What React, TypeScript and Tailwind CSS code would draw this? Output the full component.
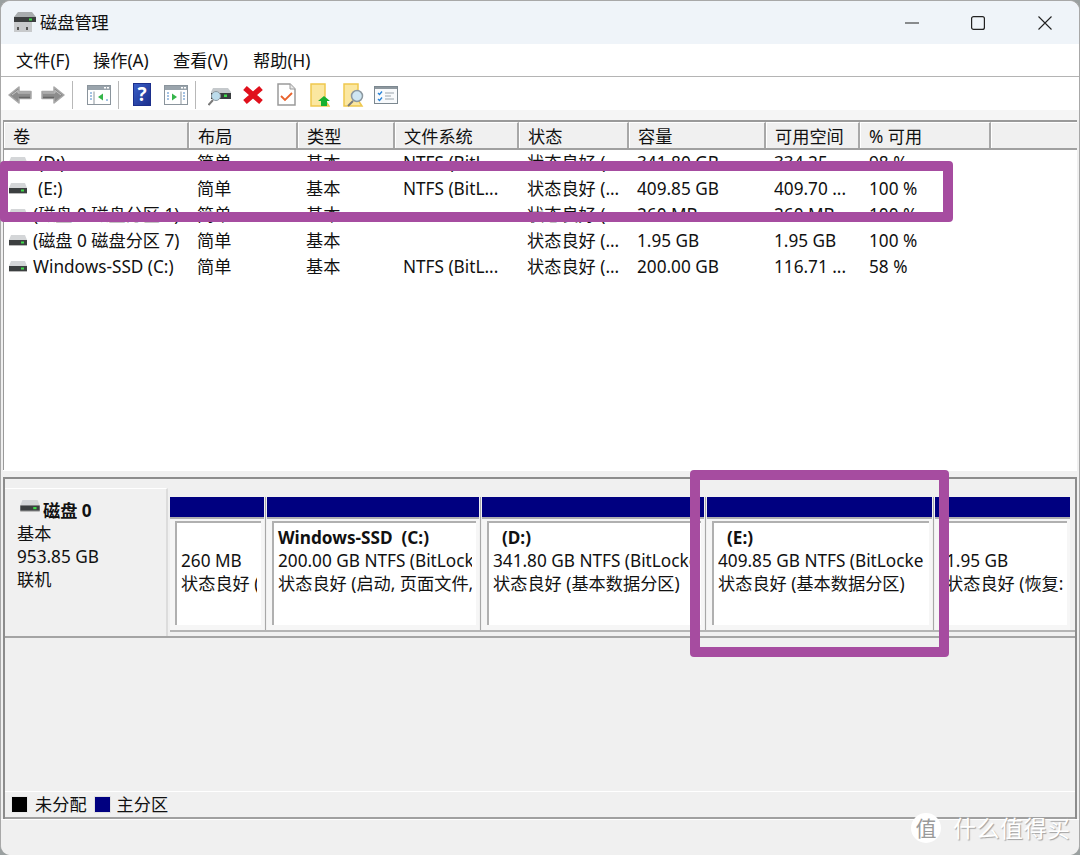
const columns = [
  { label: "卷", width: "w-[185px]" },
  { label: "布局", width: "w-[109px]" },
  { label: "类型", width: "w-[97px]" },
  { label: "文件系统", width: "w-[124px]" },
  { label: "状态", width: "w-[110px]" },
  { label: "容量", width: "w-[137px]" },
  { label: "可用空间", width: "w-[94px]" },
  { label: "% 可用", width: "w-[131px]" },
];

const rows = [
  { name: "(D:)", pad: "pl-[11px]", cells: ["简单", "基本", "NTFS (BitL...", "状态良好 (...", "341.80 GB", "334.25 ...", "98 %"] },
  { name: "(E:)", pad: "pl-[11px]", cells: ["简单", "基本", "NTFS (BitL...", "状态良好 (...", "409.85 GB", "409.70 ...", "100 %"] },
  { name: "(磁盘 0 磁盘分区 1)", pad: "pl-[6px]", cells: ["简单", "基本", "", "状态良好 (...", "260 MB", "260 MB", "100 %"] },
  { name: "(磁盘 0 磁盘分区 7)", pad: "pl-[6px]", cells: ["简单", "基本", "", "状态良好 (...", "1.95 GB", "1.95 GB", "100 %"] },
  { name: "Windows-SSD (C:)", pad: "pl-[6px]", cells: ["简单", "基本", "NTFS (BitL...", "状态良好 (...", "200.00 GB", "116.71 ...", "58 %"] },
];

const partitions = [
  { width: "w-[94px]", name: "", lines: ["260 MB", "状态良好 ("] },
  { width: "w-[212px]", name: "Windows-SSD  (C:)", lines: ["200.00 GB NTFS (BitLock", "状态良好 (启动, 页面文件,"] },
  { width: "w-[222px]", name: "  (D:)", lines: ["341.80 GB NTFS (BitLocke", "状态良好 (基本数据分区)"] },
  { width: "w-[225px]", name: "  (E:)", lines: ["409.85 GB NTFS (BitLocke", "状态良好 (基本数据分区)"] },
  { width: "w-[135px]", name: "", lines: ["1.95 GB", "状态良好 (恢复:"] },
];

const HddIcon = ({ className = "w-[18px] h-[12px]" }: { className?: string }) => (
  <svg viewBox="0 0 18 12" className={className}>
    <path d="M2 0H16L18 5H0Z" fill="#d4d6d8" />
    <rect x="0" y="5" width="18" height="5" fill="#3c3f40" />
    <rect x="0" y="10" width="18" height="1" fill="#b8b8b8" />
    <rect x="12" y="6.5" width="3" height="2" fill="#3fdc4a" />
  </svg>
);

const PaneIcon = ({ flip }: { flip?: boolean }) => (
  <svg viewBox="0 0 24 20" className="w-[24px] h-[20px]">
    <rect x="0.5" y="0.5" width="23" height="19" fill="#fff" stroke="#8a949c" />
    <rect x="1" y="1" width="22" height="4" fill="#9aa4ac" />
    <rect x="17" y="2" width="2" height="1.5" fill="#fff" />
    <rect x="20" y="2" width="2" height="1.5" fill="#fff" />
    <path d={flip ? "M17 6.5V19" : "M7 6.5V19"} stroke="#8a949c" fill="none" />
    <path
      d={flip ? "M3 8h2M3 11h2M3 14h2M19 8h2M19 11h2M19 14h2" : "M3 8h2M3 11h2M3 14h2M19 15h2"}
      stroke="#4a86c8"
      fill="none"
    />
    <path d={flip ? "M8 8.5L13 12L8 15.5Z" : "M16 8.5L11 12L16 15.5Z"} fill="#35b54a" />
  </svg>
);

const ArrowIcon = ({ right }: { right?: boolean }) => (
  <svg viewBox="0 0 24 18" className={`w-[24px] h-[18px] ${right ? "-scale-x-100" : ""}`}>
    <path d="M1 9L11 1V5.5H23V12.5H11V17Z" fill="#8c8c8c" stroke="#a8a8a8" strokeWidth="1.5" strokeLinejoin="round" />
    <path d="M4 9L10 4.5V7H22" stroke="#c4c4c4" fill="none" />
    <path d="M11 11.5H22" stroke="#666" strokeWidth="1.5" fill="none" />
  </svg>
);

const FolderBase = () => (
  <path d="M1 1H15V17L19 23H1Z" fill="#fbe7a0" stroke="#efc84e" strokeWidth="1.5" />
);

const Toolbar = () => (
  <div className="h-[34px] relative bg-white shrink-0 border-t border-[#b4b4b4] flex items-center pl-[7px] pt-[2px]">
    <div className="w-[33px]"><ArrowIcon /></div>
    <ArrowIcon right />
    <div className="w-px h-[28px] bg-[#b8b8b8] ml-[7px] mr-[14px]" />
    <PaneIcon />
    <div className="w-px h-[28px] bg-[#b8b8b8] ml-[7px] mr-[14px]" />
    <div className="w-[18px] h-[23px] bg-gradient-to-br from-[#3a5fc8] to-[#1c2f8c] border border-[#1c2f8c] text-white text-[19px] leading-[21px] font-bold text-center">?</div>
    <div className="w-[13px]" />
    <PaneIcon flip />
    <div className="w-px h-[28px] bg-[#b8b8b8] ml-[7px] mr-[12px]" />
    <svg viewBox="0 0 23 24" className="w-[23px] h-[24px]">
      <path d="M5 5H20L23 9V16H3V9Z" fill="#c5c9cc" />
      <rect x="3" y="10" width="20" height="6" fill="#3a3d3e" />
      <rect x="16" y="11.5" width="3" height="2.5" fill="#3fdc4a" />
      <circle cx="8" cy="13" r="4.5" fill="#bcdcec" stroke="#8c98a0" />
      <path d="M5 17L0.5 22" stroke="#7a7a7a" strokeWidth="2" />
    </svg>
    <div className="w-[11px]" />
    <svg viewBox="0 0 22 20" className="w-[22px] h-[20px]">
      <path d="M3 3L19 17M19 3L3 17" stroke="#e0101c" strokeWidth="5.5" />
    </svg>
    <div className="w-[13px]" />
    <svg viewBox="0 0 19 23" className="w-[19px] h-[23px]">
      <path d="M1 1H13L18 6V22H1Z" fill="#fff" stroke="#9a9a9a" strokeWidth="1.5" />
      <path d="M13 1V6H18" fill="#e8e8e8" stroke="#9a9a9a" />
      <path d="M4 13L8 17L15 10" fill="none" stroke="#e8622c" strokeWidth="1.8" />
    </svg>
    <div className="w-[14px]" />
    <svg viewBox="0 0 20 24" className="w-[20px] h-[24px]">
      <FolderBase />
      <path d="M14 13L20 18H17V23H11V18H8Z" fill="#18b030" />
    </svg>
    <div className="w-[13px]" />
    <svg viewBox="0 0 21 24" className="w-[21px] h-[24px]">
      <FolderBase />
      <circle cx="14" cy="13" r="5.5" fill="#cfe6f2" stroke="#8c98a0" strokeWidth="1.5" />
      <path d="M10 18L5 23" stroke="#7a7a7a" strokeWidth="2" />
    </svg>
    <div className="w-[10px]" />
    <svg viewBox="0 0 24 18" className="w-[24px] h-[18px]">
      <rect x="0.5" y="0.5" width="23" height="17" fill="#f8fafc" stroke="#7c8890" />
      <rect x="1" y="1" width="22" height="2" fill="#8e989f" />
      <path d="M4 7L5.5 8.5L8 5.5M4 13L5.5 14.5L8 11.5" stroke="#2a84d8" strokeWidth="1.4" fill="none" />
      <path d="M11 7H20M11 10H17M11 13H20" stroke="#9aa4ac" fill="none" />
    </svg>
  </div>
);

const VolumeList = () => (
  <div className="h-[350px] shrink-0 bg-white border-t-2 border-l border-[#9a9a9a] overflow-hidden">
    <div className="h-[28px] flex bg-[#f0f0f0] border-b-2 border-[#a0a0a0]">
      {columns.map((c) => (
        <div
          key={c.label}
          className={`${c.width} shrink-0 pl-[8px] border-l border-t border-white border-r-2 border-r-[#a8a8a8] leading-[27px] whitespace-nowrap`}
        >
          {c.label}
        </div>
      ))}
      <div className="flex-1 border-l border-t border-white" />
    </div>
    {rows.map((r) => (
      <div key={r.name} className="h-[26px] flex items-center whitespace-nowrap leading-[26px]">
        <div className="w-[185px] shrink-0 flex items-center pl-[5px]">
          <HddIcon />
          <span className={r.pad}>{r.name}</span>
        </div>
        {r.cells.map((c, i) => (
          <div key={i} className={`${columns[i + 1].width} shrink-0 ${i === 6 ? "pl-[9px]" : "pl-[8px]"}`}>
            {c}
          </div>
        ))}
      </div>
    ))}
  </div>
);

const DiskPane = () => (
  <div className="flex-1 flex flex-col border-l-2 border-r-2 border-[#8c8c8c] bg-[#f0f0f0] min-h-0">
    <div className="flex-1 pt-[9px]">
      <div className="flex h-[150px] border-b-2 border-[#a4a4a4]">
        <div className="w-[163px] shrink-0 border-t border-r-2 border-white border-r-[#dcdcdc] pl-[12px] pt-[10px] leading-[23px]">
          <div className="flex items-center h-[23px] font-bold">
            <HddIcon className="w-[20px] h-[13px] ml-[3px] mr-[3px] -mt-[8px]" />
            磁盘 0
          </div>
          <div>基本</div>
          <div>953.85 GB</div>
          <div>联机</div>
        </div>
        <div className="flex-1 pt-[9px] pl-[2px]">
          <div className="flex gap-[3px] h-[135px] border-b-2 border-[#b4b4b4]">
            {partitions.map((p, i) => (
              <div key={i} className={`${p.width} shrink-0 relative`}>
                <div className="h-[20px] bg-[#000080]" />
                <div className="h-[113px] bg-[#f6f6f6] border-t-2 border-[#b0b0b0] pt-[2px] pl-[5px] pr-[3px]">
                  <div className="h-[104px] bg-white border-t-2 border-l-2 border-[#b0b0b0] pl-[4px] pr-[4px] pt-[3px] leading-[23px] whitespace-pre overflow-hidden">
                    <div className="h-[23px] font-bold">{p.name}</div>
                    {p.lines.map((l) => (
                      <div key={l} className="overflow-hidden">{l}</div>
                    ))}
                  </div>
                </div>
                {i < 4 && <div className="absolute top-0 -right-[2px] h-[133px] w-px bg-[#a8a8a8]" />}
              </div>
            ))}
          </div>
        </div>
      </div>
    </div>
    <div className="h-[28px] shrink-0 border-t border-white border-b-2 border-b-[#a0a0a0] flex items-center pl-[6px]">
      <div className="w-[17px] h-[17px] bg-black border border-[#e8e8e8]" />
      <span className="ml-[7px] mr-[7px]">未分配</span>
      <div className="w-[17px] h-[17px] bg-[#000080] border border-[#e0e0e0]" />
      <span className="ml-[6px]">主分区</span>
    </div>
  </div>
);

export default function App() {
  return (
    <div className="w-[1080px] h-[855px] relative overflow-hidden bg-[#9aa0a0] text-[17.2px] text-[#111] font-['Noto_Sans','Noto_Sans_CJK_SC',sans-serif]">
      <div className="h-full flex flex-col rounded-[10px] overflow-hidden border-t border-x border-[#a8a8a8] bg-[#f0f0f0]">
        <div className="h-[43px] shrink-0 bg-[#eff4f9] flex items-center pl-[12px]">
          <svg viewBox="0 0 23 21" className="w-[23px] h-[21px] mr-[4px]">
            <path d="M5 0H19L23 5V9H1V5Z" fill="#a8acae" />
            <rect x="1" y="5" width="22" height="5" fill="#3c3f40" />
            <rect x="16" y="6.5" width="3" height="2" fill="#3fdc4a" />
            <path d="M1 10H19V20H1Z" fill="#c8cacc" />
            <rect x="4" y="15" width="2" height="3" fill="#555" />
            <rect x="13" y="15" width="2" height="3" fill="#555" />
          </svg>
          <span>磁盘管理</span>
          <div className="ml-auto flex items-center">
            <svg viewBox="0 0 14 14" className="w-[14px] h-[14px]">
              <path d="M0 7H14" stroke="#222" strokeWidth="1.2" />
            </svg>
            <svg viewBox="0 0 14 14" className="w-[14px] h-[14px] ml-[52px]">
              <rect x="0.6" y="0.6" width="12.8" height="12.8" rx="2" fill="none" stroke="#222" strokeWidth="1.2" />
            </svg>
            <svg viewBox="0 0 14 14" className="w-[14px] h-[14px] ml-[53px] mr-[27px]">
              <path d="M0.5 0.5L13.5 13.5M13.5 0.5L0.5 13.5" stroke="#222" strokeWidth="1.1" />
            </svg>
          </div>
        </div>
        <div className="h-[32px] shrink-0 bg-white flex items-center pl-[15px] pt-[2px]">
          <span className="w-[77px]">文件(F)</span>
          <span className="w-[80px]">操作(A)</span>
          <span className="w-[80px]">查看(V)</span>
          <span>帮助(H)</span>
        </div>
        <Toolbar />
        <div className="h-[10px] shrink-0 bg-[#f5f5f5]" />
        <div className="flex-1 flex flex-col min-h-0 pl-[2px] pr-[2px]">
          <VolumeList />
          <div className="h-[9px] shrink-0 border-t border-white border-b-2 border-b-[#8c8c8c] bg-[#f0f0f0]" />
          <DiskPane />
        </div>
        <div className="h-[36px] shrink-0 bg-[#f0f0f0] border-t border-white" />
      </div>

      <div className="absolute left-0 top-[161px] w-[953px] h-[61px] border-y-[10px] border-r-[10px] border-l-[8px] border-[#a64ca0] rounded-[4px]" />
      <div className="absolute left-[690px] top-[470px] w-[259px] h-[187px] border-[10px] border-[#a64ca0] rounded-[4px]" />

      <div className="absolute left-[911px] top-[813px] w-[30px] h-[30px] rounded-full bg-white text-[#9a9a9a] text-[21px] leading-[30px] text-center">值</div>
      <div className="absolute left-[953px] top-[811px] text-[23px] leading-[34px] tracking-[0.5px] text-white [text-shadow:1px_1px_1px_#a0a0a0] whitespace-nowrap">什么值得买</div>
    </div>
  );
}
